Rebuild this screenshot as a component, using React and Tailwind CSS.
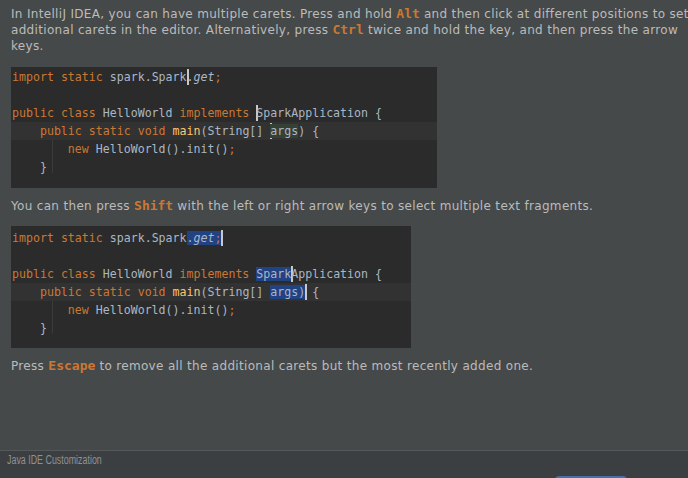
import React from "react";

const mono = { fontFamily: '"DejaVu Sans Mono", "Liberation Mono", monospace' };

const Kw = ({ children }) => <span className="text-[#cc7832]">{children}</span>;
const Fn = ({ children }) => <span className="text-[#ffc66d]">{children}</span>;
const It = ({ children }) => <span className="italic">{children}</span>;
const Sel = ({ children }) => <span className="bg-[#214283]">{children}</span>;
const Caret = () => (
  <span className="inline-block w-0 h-[16px] border-l-2 border-[#c8c8c8] -mr-[2px] align-[-4px]" />
);

const Key = ({ children }) => (
  <span className="font-bold text-[#cc7832] text-[13px] tracking-normal" style={mono}>
    {children}
  </span>
);

const CodeLine = ({ current, children }) => (
  <div className={`h-[18px] leading-[18px] pl-[1px] whitespace-pre ${current ? "bg-[#323232]" : ""}`}>
    {children}
  </div>
);

const CodeBlock = ({ width, pt, height, children }) => (
  <div
    className={`relative bg-[#2b2b2b] text-[#a9b7c6] text-[11.6px] tracking-normal ${width} ${pt} ${height}`}
    style={mono}
  >
    {children}
  </div>
);

const Guide = ({ top }) => (
  <div className={`absolute left-[41px] w-px h-[33px] bg-[#3b3b3b] ${top}`} />
);

export default function App() {
  return (
    <div
      className="w-[688px] h-[478px] bg-[#45494a] flex flex-col overflow-hidden"
      style={{ fontFamily: '"DejaVu Sans", Verdana, sans-serif' }}
    >
      <div className="flex-1 pl-[11px] pt-[6px] text-[12px] leading-[16px] tracking-[0.32px] text-[#bbbbbb]">
        <p className="whitespace-nowrap">
          In IntelliJ IDEA, you can have multiple carets. Press and hold <Key>Alt</Key> and then click at different positions to set
          <br />
          additional carets in the editor. Alternatively, press <Key>Ctrl</Key> twice and hold the key, and then press the arrow
          <br />
          keys.
        </p>

        <div className="mt-[13px]">
          <CodeBlock width="w-[426px]" pt="pt-[1px]" height="h-[121px]">
            <CodeLine>
              <Kw>import</Kw> <Kw>static</Kw> spark.Spark<Caret />.<It>get</It><Kw>;</Kw>
            </CodeLine>
            <CodeLine> </CodeLine>
            <CodeLine>
              <Kw>public</Kw> <Kw>class</Kw> HelloWorld <Kw>implements</Kw> <Caret />SparkApplication {"{"}
            </CodeLine>
            <CodeLine current>
              {"    "}<Kw>public</Kw> <Kw>static</Kw> <Kw>void</Kw> <Fn>main</Fn>(String[] <Caret /><span className="bg-[#344134]">args</span>) {"{"}
            </CodeLine>
            <CodeLine>
              {"        "}<Kw>new</Kw> HelloWorld().init()<Kw>;</Kw>
            </CodeLine>
            <CodeLine>{"    }"}</CodeLine>
            <Guide top="top-[73px]" />
          </CodeBlock>
        </div>

        <p className="mt-[10px] whitespace-nowrap">
          You can then press <Key>Shift</Key> with the left or right arrow keys to select multiple text fragments.
        </p>

        <div className="mt-[12px]">
          <CodeBlock width="w-[400px]" pt="pt-[3px]" height="h-[122px]">
            <CodeLine>
              <Kw>import</Kw> <Kw>static</Kw> spark.Spark<Sel>.<It>get</It><Kw>;</Kw></Sel><Caret />
            </CodeLine>
            <CodeLine> </CodeLine>
            <CodeLine>
              <Kw>public</Kw> <Kw>class</Kw> HelloWorld <Kw>implements</Kw> <Sel>Spark</Sel><Caret />Application {"{"}
            </CodeLine>
            <CodeLine current>
              {"    "}<Kw>public</Kw> <Kw>static</Kw> <Kw>void</Kw> <Fn>main</Fn>(String[] <Sel>args)</Sel><Caret /> {"{"}
            </CodeLine>
            <CodeLine>
              {"        "}<Kw>new</Kw> HelloWorld().init()<Kw>;</Kw>
            </CodeLine>
            <CodeLine>{"    }"}</CodeLine>
            <Guide top="top-[75px]" />
          </CodeBlock>
        </div>

        <p className="mt-[10px] whitespace-nowrap">
          Press <Key>Escape</Key> to remove all the additional carets but the most recently added one.
        </p>
      </div>

      <div className="h-[28px] shrink-0 border-t border-[#55595b] bg-[#3c3f41] flex justify-between items-start">
        <span
          className="inline-block ml-[7px] pt-[2px] text-[12px] leading-[14px] text-[#8e9194] origin-left scale-x-[0.74] whitespace-nowrap"
          style={{ fontFamily: '"Liberation Sans Narrow", "Liberation Sans", sans-serif' }}
        >
          Java IDE Customization
        </span>
        <div className="mt-[25px] mr-[61px] w-[72px] h-[20px] rounded-t-[4px] bg-[#4a6ea5]" />
      </div>
    </div>
  );
}
